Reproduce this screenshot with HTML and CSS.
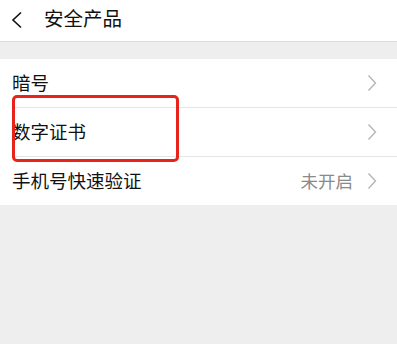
FILE: index.html
```html
<!DOCTYPE html>
<html lang="zh">
<head>
<meta charset="utf-8">
<link rel="stylesheet" href="styles.css">
</head>
<body>
<div class="page">
  <header class="header">
    <svg class="back" width="14" height="18" viewBox="0 0 14 18"><path d="M11 1.5 L3 9 L11 16.5" fill="none" stroke="#111" stroke-width="1.6"/></svg>
    <span class="title">安全产品</span>
  </header>
  <div class="gap"></div>
  <ul class="list">
    <li class="row"><span class="label">暗号</span><span class="right"><svg class="chev" width="10" height="18" viewBox="0 0 10 18"><path d="M1.5 1.5 L8.5 9 L1.5 16.5" fill="none" stroke="#b5b5b5" stroke-width="1.4"/></svg></span></li>
    <li class="row highlight"><span class="label">数字证书</span><span class="right"><svg class="chev" width="10" height="18" viewBox="0 0 10 18"><path d="M1.5 1.5 L8.5 9 L1.5 16.5" fill="none" stroke="#b5b5b5" stroke-width="1.4"/></svg></span><span class="mark"></span></li>
    <li class="row"><span class="label">手机号快速验证</span><span class="right"><span class="value">未开启</span><svg class="chev" width="10" height="18" viewBox="0 0 10 18"><path d="M1.5 1.5 L8.5 9 L1.5 16.5" fill="none" stroke="#b5b5b5" stroke-width="1.4"/></svg></span></li>
  </ul>
</div>
</body>
</html>
```
FILE: styles.css
```css
html, body {
  margin: 0;
  padding: 0;
  background: #eeeeee;
  font-family: "Noto Sans CJK SC", "Noto Sans", sans-serif;
}
.page {
  width: 397px;
  height: 344px;
  background: #eeeeee;
  overflow: hidden;
}
.header {
  height: 42px;
  background: #ffffff;
  border-bottom: 1px solid #dcdcdc;
  display: flex;
  align-items: center;
  padding-left: 10px;
  box-sizing: border-box;
}
.back {
  margin-top: -2px;
}
.title {
  margin-left: 20px;
  font-size: 19.5px;
  color: #111;
  line-height: 1;
  margin-top: -6px;
}
.gap {
  height: 17px;
}
.list {
  list-style: none;
  margin: 0;
  padding: 0 0 0 12px;
  background: #ffffff;
}
.row {
  position: relative;
  height: 48px;
  display: flex;
  align-items: center;
  justify-content: space-between;
  border-bottom: 1px solid #e6e6e6;
  padding-right: 20px;
}
.row:last-child {
  border-bottom: none;
}
.label {
  font-size: 18.5px;
  color: #111;
  margin-top: -2px;
}
.right {
  display: flex;
  align-items: center;
}
.value {
  font-size: 17.5px;
  color: #8a8a8a;
  margin-right: 14px;
  margin-top: -2px;
}
.chev {
  display: block;
}
.mark {
  position: absolute;
  left: 0;
  top: -13px;
  width: 167px;
  height: 67px;
  border: 3px solid #e8231c;
  border-radius: 5px;
  box-sizing: border-box;
}
```
